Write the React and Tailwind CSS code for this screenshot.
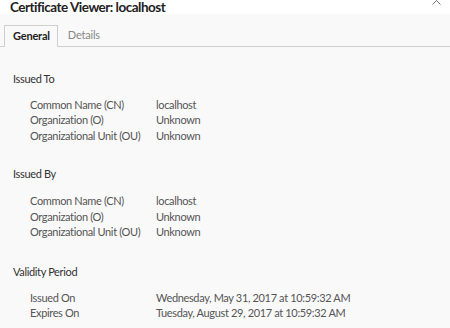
export default function App() {
  const font = { fontFamily: 'Lato, "Noto Sans", sans-serif' };
  const Row = ({ k, v }) => (
    <div className="flex h-[15.5px] items-center whitespace-nowrap">
      <div className="w-[126px] shrink-0">{k}</div>
      <div>{v}</div>
    </div>
  );
  return (
    <div className="w-[450px] h-[328px] overflow-hidden bg-[#f9f9f9] relative text-[#555]" style={font}>
      <div className="h-[14px] bg-white relative">
        <div className="absolute left-[10px] top-[-3px] text-[13.5px] font-bold text-[#222] tracking-[-0.5px] whitespace-nowrap">
          Certificate Viewer: localhost
        </div>
        <svg className="absolute left-[432px] top-[-4px]" width="9" height="9" viewBox="0 0 9 9">
          <path d="M0.5 0.5 L8.5 8.5 M8.5 0.5 L0.5 8.5" stroke="#777" strokeWidth="1" />
        </svg>
      </div>
      <div className="h-[11px]" />
      <div className="flex items-end h-[22px] border-b border-[#cfcfcf] pl-[4px] text-[11px] tracking-[-0.2px]">
        <div className="h-[22px] pl-[8px] pr-[7px] flex items-center border border-b-0 border-[#cfcfcf] bg-[#f9f9f9] font-bold text-[#222] -mb-px">
          General
        </div>
        <div className="px-[10px] h-[21px] flex items-center text-[#888]">Details</div>
      </div>
      <div className="pl-[13px] text-[11px] tracking-[-0.35px] pt-[24px]">
        <div className="text-[#333] h-[16px] flex items-center">Issued To</div>
        <div className="pl-[17px] pt-[10px]">
          <Row k="Common Name (CN)" v="localhost" />
          <Row k="Organization (O)" v="Unknown" />
          <Row k="Organizational Unit (OU)" v="Unknown" />
        </div>
        <div className="text-[#333] h-[16px] flex items-center mt-[23px]">Issued By</div>
        <div className="pl-[17px] pt-[11px]">
          <Row k="Common Name (CN)" v="localhost" />
          <Row k="Organization (O)" v="Unknown" />
          <Row k="Organizational Unit (OU)" v="Unknown" />
        </div>
        <div className="text-[#333] h-[16px] flex items-center mt-[24px]">Validity Period</div>
        <div className="pl-[17px] pt-[10px]">
          <Row k="Issued On" v="Wednesday, May 31, 2017 at 10:59:32 AM" />
          <Row k="Expires On" v="Tuesday, August 29, 2017 at 10:59:32 AM" />
        </div>
      </div>
    </div>
  );
}
